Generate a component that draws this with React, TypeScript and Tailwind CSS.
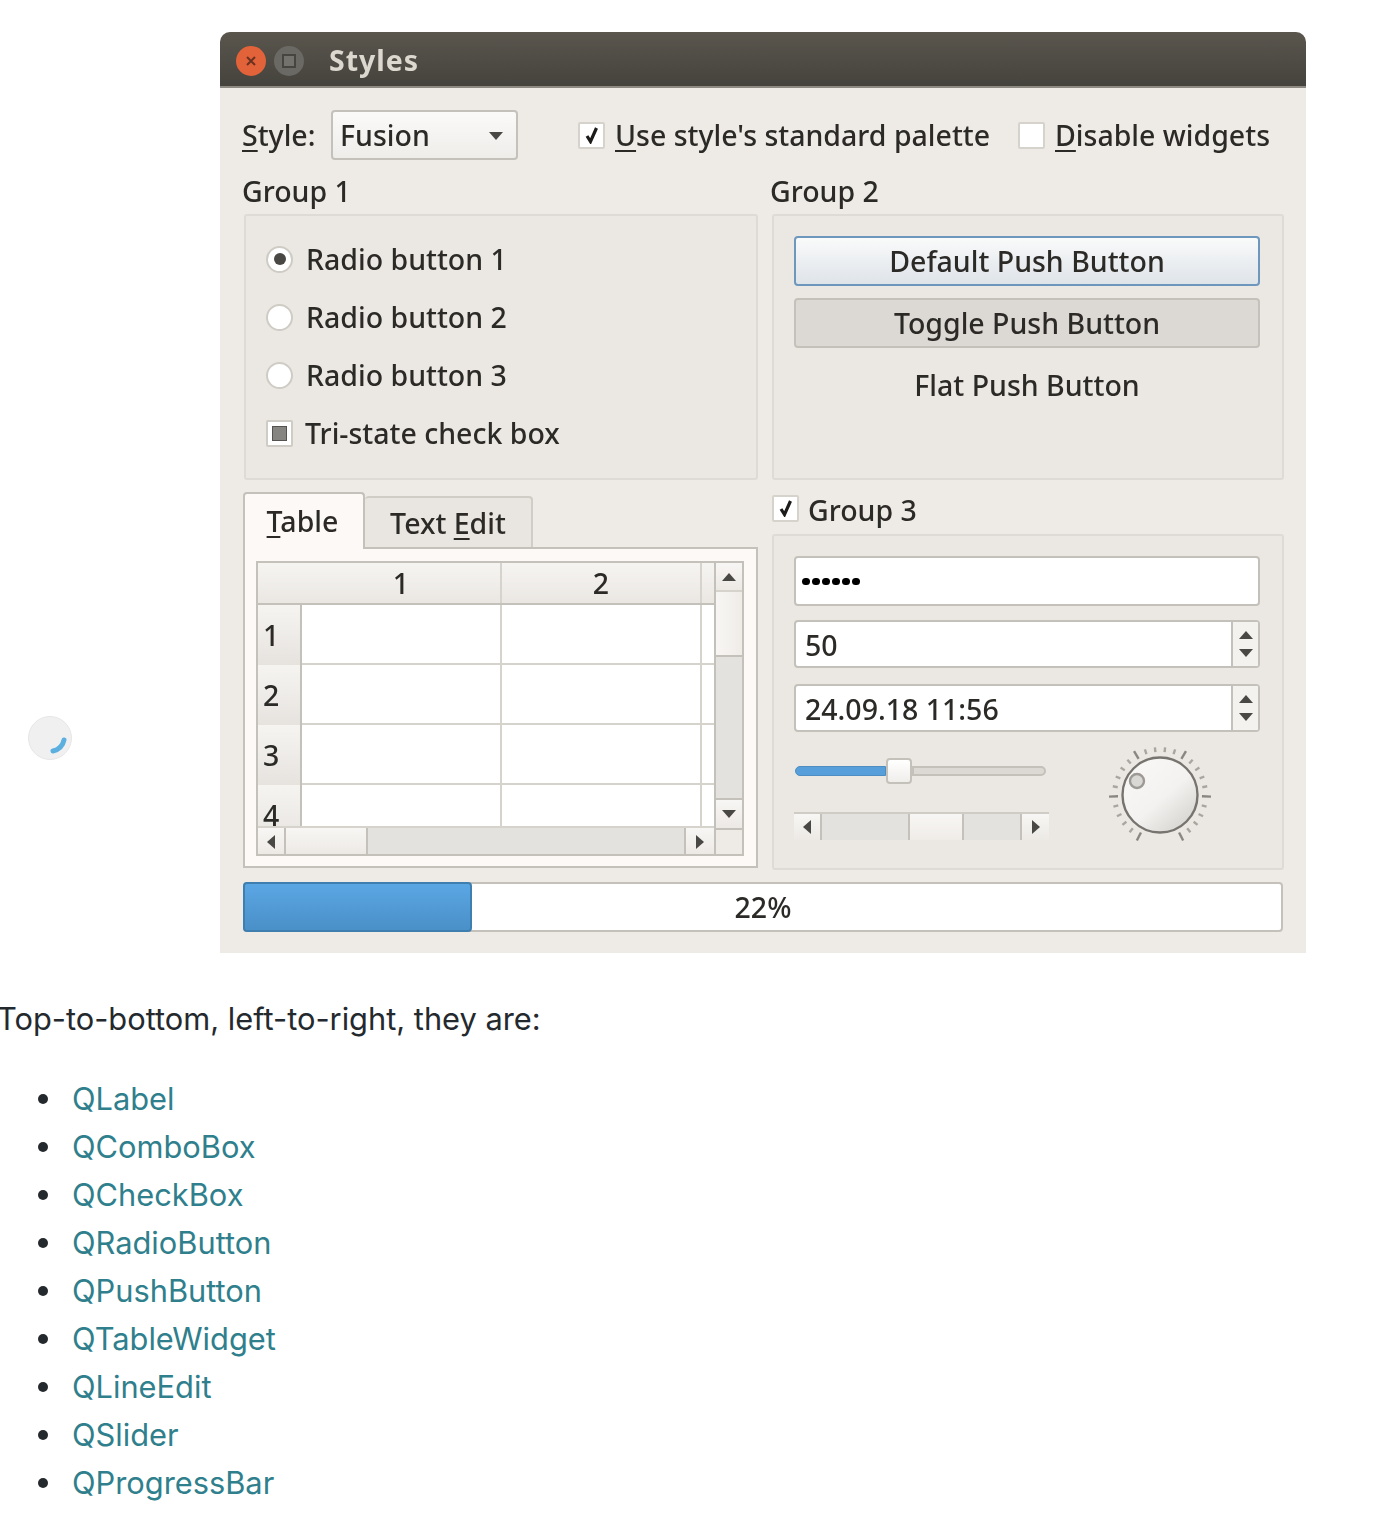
import React from "react";

const qt = { fontFamily: '"Noto Sans", sans-serif' };

const Tri = ({ dir, className = "" }: { dir: "up" | "down" | "left" | "right"; className?: string }) => {
  const pts = { up: "0,8 7,0 14,8", down: "0,0 14,0 7,8", left: "8,0 8,14 0,7", right: "0,0 0,14 8,7" }[dir];
  const w = dir === "up" || dir === "down" ? 14 : 8;
  const h = dir === "up" || dir === "down" ? 8 : 14;
  return (
    <svg width={w} height={h} viewBox={`0 0 ${w} ${h}`} className={className}>
      <polygon points={pts} fill="#4a4845" />
    </svg>
  );
};

const Check = ({ checked = false }: { checked?: boolean }) => (
  <span className="flex h-[27px] w-[27px] shrink-0 items-center justify-center rounded-[2px] border-2 border-[#d6d2cc] bg-white">
    {checked && (
      <svg width="14" height="18" viewBox="0 0 14 18">
        <path d="M2 10 L5.5 15.5 L11.5 2" fill="none" stroke="#1c1b1a" strokeWidth="3.2" />
      </svg>
    )}
  </span>
);

const Radio = ({ label, on = false }: { label: string; on?: boolean }) => (
  <div className="flex h-[58px] items-center gap-[13px]">
    <span className="flex h-[27px] w-[27px] items-center justify-center rounded-full border-2 border-[#cfcbc5] bg-white">
      {on && <span className="h-[12px] w-[12px] rounded-full bg-[#4a4845]" />}
    </span>
    <span>{label}</span>
  </div>
);

const SpinBox = ({ value }: { value: string }) => (
  <div className="flex h-[48px] rounded-[4px] border-2 border-[#c4c0ba] bg-white">
    <span className="flex flex-1 items-center pl-[9px] pt-[2px]">{value}</span>
    <div className="flex w-[27px] flex-col items-center justify-center gap-[10px] border-l-2 border-[#c4c0ba] bg-[#f4f2ef]">
      <Tri dir="up" />
      <Tri dir="down" />
    </div>
  </div>
);

const Dial = () => {
  const ticks: number[] = [];
  for (let i = 0; i <= 25; i++) ticks.push(-153 + i * 12.24);
  return (
    <svg width="104" height="100" viewBox="0 0 104 100">
      <defs>
        <linearGradient id="dialFill" x1="0.15" y1="0.1" x2="0.85" y2="0.9">
          <stop offset="0" stopColor="#f8f7f6" />
          <stop offset="0.55" stopColor="#f3f2f0" />
          <stop offset="1" stopColor="#d8d6d2" />
        </linearGradient>
      </defs>
      {ticks.map((a, i) => {
        const major = i % 5 === 0;
        const r = (a * Math.PI) / 180;
        const r1 = major ? 42 : 43;
        const r2 = major ? 51 : 48;
        return (
          <line
            key={i}
            x1={52 + r1 * Math.sin(r)}
            y1={49 - r1 * Math.cos(r)}
            x2={52 + r2 * Math.sin(r)}
            y2={49 - r2 * Math.cos(r)}
            stroke={major ? "#8a8782" : "#a9a6a0"}
            strokeWidth="2.4"
          />
        );
      })}
      <circle cx="52" cy="49" r="37.5" fill="url(#dialFill)" stroke="#77746f" strokeWidth="2.4" />
      <circle cx="29" cy="35" r="7" fill="#dad8d4" stroke="#9d9a95" strokeWidth="2.4" />
    </svg>
  );
};

const btnArrow = "flex items-center justify-center bg-gradient-to-b from-[#f8f6f4] to-[#ece9e5]";

const StylesWindow = () => (
  <div className="ml-[220px] mt-[32px] w-[1086px] overflow-hidden rounded-t-[10px] bg-[#eeebe6] text-[28.5px] font-medium leading-none text-[#2c2a27] blur-[0.6px]" style={qt}>
    <div className="flex h-[56px] items-center border-b-2 border-[#8d8a83] bg-gradient-to-b from-[#5a564e] to-[#45433d] pl-[16px] pt-[3px]">
      <span className="flex h-[30px] w-[30px] items-center justify-center rounded-full bg-[#e2623a]">
        <svg width="12" height="12" viewBox="0 0 12 12">
          <path d="M2 2 L10 10 M10 2 L2 10" stroke="#6c3220" strokeWidth="2" />
        </svg>
      </span>
      <span className="ml-[8px] flex h-[30px] w-[30px] items-center justify-center rounded-full bg-[#6b6964]">
        <span className="h-[14px] w-[14px] border-2 border-[#47453f] bg-[#74726c]" />
      </span>
      <span className="ml-[25px] font-bold tracking-[1px] text-[#dcd8cf]">Styles</span>
    </div>

    <div className="px-[22px] pb-[21px] pt-[22px]">
      <div className="flex h-[50px] items-center">
        <span className="w-[89px]">
          <span className="underline underline-offset-4">S</span>tyle:
        </span>
        <div className="flex h-[50px] w-[187px] items-center justify-between rounded-[4px] border-2 border-[#c4c0ba] bg-gradient-to-b from-[#fbfaf9] to-[#efedea] pl-[7px] pr-[13px]">
          <span>Fusion</span>
          <Tri dir="down" className="mt-[2px]" />
        </div>
        <div className="ml-[60px] flex w-[440px] items-center gap-[10px]">
          <Check checked />
          <span>
            <span className="underline underline-offset-4">U</span>se style's standard palette
          </span>
        </div>
        <div className="flex items-center gap-[10px]">
          <Check />
          <span className="whitespace-nowrap">
            <span className="underline underline-offset-4">D</span>isable widgets
          </span>
        </div>
      </div>

      <div className="mt-[8px] grid grid-cols-[516px_512px] gap-x-[14px]">
        <div>
          <div className="flex h-[46px] items-center">Group 1</div>
          <div className="ml-[2px] h-[266px] rounded-[3px] border-2 border-[#dedad5] bg-[#ebe8e3] pl-[20px] pt-[14px]">
            <Radio label="Radio button 1" on />
            <Radio label="Radio button 2" />
            <Radio label="Radio button 3" />
            <div className="flex h-[58px] items-center gap-[12px]">
              <span className="flex h-[27px] w-[27px] items-center justify-center rounded-[2px] border-2 border-[#cfcbc5] bg-white">
                <span className="h-[15px] w-[15px] border border-[#55534f] bg-[#878581]" />
              </span>
              <span>Tri-state check box</span>
            </div>
          </div>
        </div>

        <div>
          <div className="-ml-[2px] flex h-[46px] items-center">Group 2</div>
          <div className="h-[266px] rounded-[3px] border-2 border-[#dedad5] bg-[#ebe8e3] pl-[20px] pr-[22px] pt-[20px]">
            <div className="flex h-[50px] items-center justify-center rounded-[4px] border-2 border-[#6e97bd] bg-gradient-to-b from-[#f9fafa] to-[#dfe4e9]">Default Push Button</div>
            <div className="mt-[12px] flex h-[50px] items-center justify-center rounded-[4px] border-2 border-[#c4c0ba] bg-[#dcd8d4]">Toggle Push Button</div>
            <div className="mt-[12px] flex h-[50px] items-center justify-center">Flat Push Button</div>
          </div>
        </div>

        <div className="ml-[1px] mt-[12px]">
          <div className="relative z-10 flex h-[55px] items-end">
            <div className="-mb-[2px] flex h-[57px] w-[122px] items-center justify-center rounded-t-[4px] border-x-2 border-t-2 border-[#c4c0ba] bg-[#fdf9f6] pb-[1px] pr-[3px]">
              <span>
                <span className="underline underline-offset-4">T</span>able
              </span>
            </div>
            <div className="flex h-[51px] w-[168px] items-center justify-center rounded-t-[4px] border-r-2 border-t-2 border-[#d0ccc6] bg-[#e9e6e2] pt-[2px]">
              <span>
                Text <span className="underline underline-offset-4">E</span>dit
              </span>
            </div>
          </div>
          <div className="h-[321px] border-2 border-[#c4c0ba] bg-[#fdf9f6] pl-[11px] pt-[12px]">
            <div className="flex h-[295px] w-[488px] border-2 border-[#c4c0ba]">
              <div className="w-[456px] overflow-hidden">
                <div className="flex h-[42px] border-b-2 border-[#c4c0ba] bg-gradient-to-b from-[#f6f4f1] to-[#eae7e3]">
                  <div className="flex w-[244px] items-center justify-center border-r-2 border-[#d6d2cc] pl-[44px]">1</div>
                  <div className="flex w-[200px] items-center justify-center border-r-2 border-[#d6d2cc]">2</div>
                </div>
                {["1", "2", "3", "4"].map((n) => (
                  <div key={n} className={`flex border-b-2 border-[#d6d2cc] ${n === "4" ? "h-[43px] overflow-hidden" : "h-[60px]"}`}>
                    <div className="flex h-[60px] w-[44px] shrink-0 items-center border-r-2 border-[#c4c0ba] bg-gradient-to-b from-[#f6f4f1] to-[#e6e3df] pl-[5px]">{n}</div>
                    <div className="w-[200px] border-r-2 border-[#d6d2cc] bg-white" />
                    <div className="w-[200px] border-r-2 border-[#d6d2cc] bg-white" />
                    <div className="flex-1 bg-white" />
                  </div>
                ))}
                <div className="flex h-[27px] bg-gradient-to-b from-[#f8f6f4] to-[#ece9e5]">
                  <div className="flex h-full w-[28px] items-center justify-center border-r-2 border-[#c4c0ba]"><Tri dir="left" /></div>
                  <div className="h-full w-[82px] border-r-2 border-[#c4c0ba]" />
                  <div className="h-full w-[318px] border-r-2 border-[#c4c0ba] bg-[#e4e2de]" />
                  <div className="flex h-full w-[28px] items-center justify-center"><Tri dir="right" /></div>
                </div>
              </div>
              <div className="flex w-[28px] flex-col border-l-2 border-[#c4c0ba]">
                <div className={`h-[29px] border-b-2 border-[#d6d2cc] ${btnArrow}`}><Tri dir="up" /></div>
                <div className="h-[63px] bg-gradient-to-r from-[#f8f6f4] to-[#efece8]" />
                <div className="h-[145px] border-y-2 border-[#c4c0ba] bg-[#e4e2de]" />
                <div className={`h-[28px] ${btnArrow}`}><Tri dir="down" /></div>
                <div className="flex-1 border-t-2 border-[#c4c0ba] bg-[#eeebe6]" />
              </div>
            </div>
          </div>
        </div>

        <div className="mt-[12px]">
          <div className="-mt-[5px] mb-[5px] flex h-[42px] items-center gap-[9px]">
            <Check checked />
            <span className="pt-[5px]">Group 3</span>
          </div>
          <div className="h-[336px] rounded-[3px] border-2 border-[#dedad5] bg-[#ebe8e3] pl-[20px] pr-[22px] pt-[20px]">
            <div className="flex h-[50px] items-center gap-[2px] rounded-[4px] border-2 border-[#c4c0ba] bg-white pl-[6px]">
              {[0, 1, 2, 3, 4, 5].map((i) => (
                <span key={i} className="h-[7px] w-[8px] rounded-full bg-black" />
              ))}
            </div>
            <div className="mt-[14px]"><SpinBox value="50" /></div>
            <div className="mt-[16px]"><SpinBox value="24.09.18 11:56" /></div>
            <div className="flex">
              <div className="w-[256px]">
                <div className="mt-[26px] flex h-[26px] items-center pl-[1px]">
                  <div className="h-[10px] w-[91px] rounded-l-full border border-[#4d8dc1] bg-[#569fda]" />
                  <div className="h-[26px] w-[26px] shrink-0 rounded-[4px] border-2 border-[#c4c0ba] bg-gradient-to-b from-white to-[#f0eeeb]" />
                  <div className="h-[10px] w-[134px] rounded-r-full border-2 border-[#c4c0ba] bg-[#dcd9d5]" />
                </div>
                <div className="mt-[28px] flex h-[28px] w-[255px] border-t-2 border-[#cfcbc5]">
                  <div className={`w-[28px] border-r-2 border-[#c4c0ba] ${btnArrow}`}><Tri dir="left" /></div>
                  <div className="w-[88px] border-r-2 border-[#c4c0ba] bg-[#e4e2de]" />
                  <div className="w-[54px] border-r-2 border-[#c4c0ba] bg-gradient-to-b from-[#f8f6f4] to-[#efece8]" />
                  <div className="w-[58px] border-r-2 border-[#c4c0ba] bg-[#e4e2de]" />
                  <div className={`flex-1 ${btnArrow}`}><Tri dir="right" /></div>
                </div>
              </div>
              <div className="ml-[58px] mt-[14px]">
                <Dial />
              </div>
            </div>
          </div>
        </div>
      </div>

      <div className="relative ml-[1px] mt-[12px] flex h-[50px] w-[1040px] items-center justify-center rounded-[4px] border-2 border-[#c4c0ba] bg-white">
        <div className="absolute -bottom-[2px] -left-[2px] -top-[2px] w-[229px] rounded-[4px] border-2 border-[#3f7fb0] bg-gradient-to-b from-[#5aa6e4] to-[#4a90c8]" />
        <span className="relative">22%</span>
      </div>
    </div>
  </div>
);

const links = ["QLabel", "QComboBox", "QCheckBox", "QRadioButton", "QPushButton", "QTableWidget", "QLineEdit", "QSlider", "QProgressBar"];

export default function App() {
  return (
    <div className="relative h-[1538px] overflow-hidden bg-white">
      <StylesWindow />

      <div className="absolute left-[28px] top-[716px] h-[44px] w-[44px] rounded-full border border-[#e6e6e6] bg-[#f0f0f0] blur-[0.4px]">
        <svg width="42" height="42" viewBox="0 0 42 42">
          <path d="M24 34 Q33 32 35 23" fill="none" stroke="#5bb0e0" strokeWidth="5" strokeLinecap="round" />
        </svg>
      </div>

      <div className="text-[30.8px] leading-[48px] text-[#24292e]" style={{ fontFamily: "Inter, sans-serif" }}>
        <p className="-ml-[3px] mt-[42px] whitespace-nowrap">Top-to-bottom, left-to-right, they are:</p>
        <ul className="mt-[32px] flex flex-col pl-[38px]">
          {links.map((l) => (
            <li key={l} className="flex items-center">
              <span className="h-[10px] w-[10px] rounded-full bg-[#24292e]" />
              <a className="ml-[24px] text-[#2f7f8d]">{l}</a>
            </li>
          ))}
        </ul>
      </div>
    </div>
  );
}
